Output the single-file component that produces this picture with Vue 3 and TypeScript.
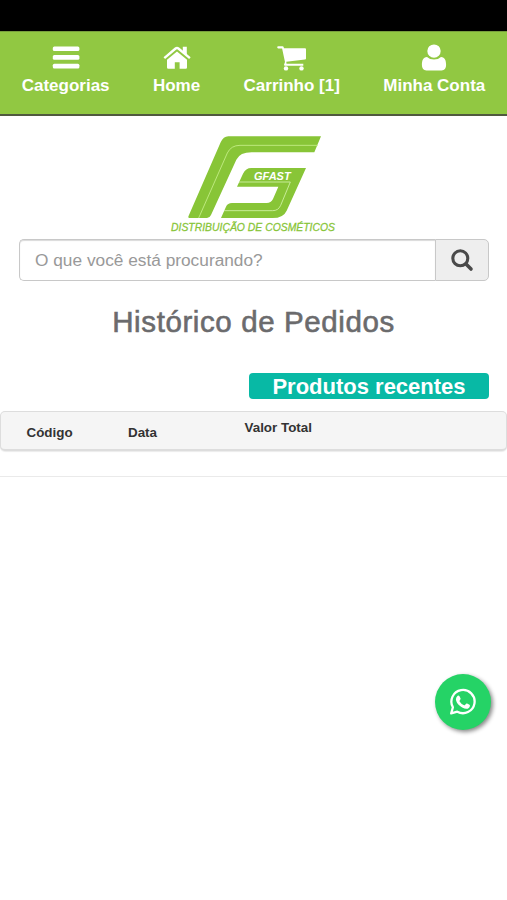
<script setup lang="ts">
import { ref } from 'vue'

interface NavItem {
  label: string
  icon: 'bars' | 'home' | 'cart' | 'user'
}

const navItems: NavItem[] = [
  { label: 'Categorias', icon: 'bars' },
  { label: 'Home', icon: 'home' },
  { label: 'Carrinho [1]', icon: 'cart' },
  { label: 'Minha Conta', icon: 'user' },
]
const query = ref('')
</script>

<template>
  <div class="page">
    <div class="status"></div>
    <nav class="nav">
      <a v-for="item in navItems" :key="item.icon" class="nav-item">
        <svg class="nav-icon" viewBox="0 0 30 28" fill="#fff">
          <g v-if="item.icon === 'bars'">
            <rect x="1.8" y="2.4" width="26.6" height="4.6" rx="1.5" />
            <rect x="1.8" y="11.1" width="26.6" height="4.6" rx="1.5" />
            <rect x="1.8" y="19.8" width="26.6" height="4.6" rx="1.5" />
          </g>
          <g v-else-if="item.icon === 'home'">
            <path d="M15 7.6 25 15.8V23.5Q25 24.7 23.8 24.7H17.6V18.2H12.8V24.7H6.2Q5 24.7 5 23.5V15.8Z" />
            <path d="M2.3 14.1 13.6 4.5Q15 3.4 16.4 4.5L27.9 14.1" fill="none" stroke="#fff" stroke-width="2.4" />
            <path d="M20.8 2.7H24.8V11.6L20.8 8.2Z" />
          </g>
          <g v-else-if="item.icon === 'cart'">
            <path d="M1.2 2.2H5.5Q6.5 2.2 6.8 3.5L7 4.3H28Q29 4.3 29 5.3V14.4Q29 15.4 28 15.5L9.3 17.7 9.5 19.7H26.3V21.8H8Q7 21.8 7 20.8L8 18 5.1 4.4H1.2Q.2 4.2 .2 3.3 .2 2.3 1.2 2.2Z" />
            <circle cx="9" cy="24.4" r="2.2" /><circle cx="24.5" cy="24.4" r="2.2" />
          </g>
          <g v-else>
            <path d="M8 12.9Q10.7 15.5 15 15.5T22 12.9C26 12.9 27.1 16.5 27.1 21.1Q27.1 26.5 22.6 26.5H7.4Q2.9 26.5 2.9 21.1C2.9 16.5 4 12.9 8 12.9Z" />
            <circle cx="15" cy="7.1" r="6.7" />
          </g>
        </svg>
        <span>{{ item.label }}</span>
      </a>
    </nav>

    <svg class="logo" viewBox="0 0 570 342">
      <path d="M205 34H483L463 82H275Q240 82 229 104L153 270Q149 279 141 279H88Q83 279 86 272L182 52Q190 34 205 34Z" fill="#88c537" />
      <path d="M438 129H274Q257 129 249 146L231 185H355L339 222Q333 234 320 234H216Q203 234 198 245L183 279H338Q370 279 380 257Z" fill="#88c537" />
      <path d="M474 61H240Q213 61 202 84L116 279" fill="none" stroke="#c8ef8c" stroke-width="2.5" />
      <path d="M237 171H391L362 241Q355 257 338 257H192" fill="none" stroke="#d4f3aa" stroke-width="2.5" />
      <text x="282" y="165" class="logo-name" textLength="110" lengthAdjust="spacingAndGlyphs">GFAST</text>
      <text x="33" y="317" class="logo-tag" textLength="492" lengthAdjust="spacingAndGlyphs">DISTRIBUIÇÃO DE COSMÉTICOS</text>
    </svg>

    <form class="search" @submit.prevent>
      <input v-model="query" type="text" placeholder="O que você está procurando?" />
      <button type="submit" aria-label="Buscar">
        <svg width="24" height="24" viewBox="0 0 24 24" fill="none" stroke="#4a4a4a">
          <circle cx="10.3" cy="10.3" r="7.5" stroke-width="3.1" />
          <path d="M16 16 21 21" stroke-width="3.6" stroke-linecap="round" />
        </svg>
      </button>
    </form>

    <h1>Histórico de Pedidos</h1>
    <div class="recent-row"><a class="recent">Produtos recentes</a></div>

    <div class="table-head">
      <span class="code">Código</span>
      <span class="date">Data</span>
      <span class="total">Valor Total</span>
    </div>
    <hr />

    <a class="whatsapp" aria-label="WhatsApp">
      <svg width="28" height="28" viewBox="0 0 28 28">
        <path d="M2.2 25.4 3.9 19.3A11.6 11.6 0 1 1 8.3 23.7Z" fill="none" stroke="#fff" stroke-width="2.3" stroke-linejoin="round" />
        <path d="M8.6 7.8Q9.7 6.9 10.5 8.2L11.6 10.6Q11.8 11.3 10.7 12.5 10.3 13 10.6 13.5 12.2 16.2 15.1 17.3 15.6 17.5 16 17L17.1 15.7Q17.5 15.3 18.1 15.6L20.5 16.8Q21.1 17.1 20.9 17.9 20.3 20.8 17.2 20.7C12.7 20.5 7.2 15.5 6.9 11.4Q6.9 9.3 8.6 7.8Z" fill="#fff" />
      </svg>
    </a>
  </div>
</template>

<style>
body {
  background: #fff;
}
</style>

<style scoped>
.page {
  height: 900px;
  overflow: hidden;
  font-family: "Liberation Sans", Arial, sans-serif;
  color: #333;
}
.page * {
  box-sizing: border-box;
}
.status {
  height: 31px;
  background: #000;
}
.nav {
  display: flex;
  justify-content: space-around;
  height: 85px;
  padding-top: 12px;
  background: #91c842;
  border-top: 1px solid #779f3d;
  border-bottom: 2px solid #50593f;
}
.nav-item {
  display: flex;
  flex-direction: column;
  align-items: center;
  color: #fff;
  font-size: 17px;
  font-weight: bold;
  line-height: 20px;
  white-space: nowrap;
}
.nav-icon {
  width: 30px;
  height: 28px;
  margin-bottom: 4px;
}
.logo {
  display: block;
  width: 190px;
  height: 114px;
  margin: 9px 0 0 160px;
}
.logo-name {
  font-size: 34px;
  font-weight: bold;
  font-style: italic;
  fill: #fff;
}
.logo-tag {
  font-size: 33px;
  font-style: italic;
  fill: #88c537;
  stroke: #88c537;
  stroke-width: 0.8px;
}
.search {
  display: flex;
  height: 42px;
  margin: 0 18px 0 19px;
}
.search input {
  flex: 1;
  min-width: 0;
  padding: 0 15px;
  border: 1px solid #c8c8c8;
  border-right: 0;
  border-radius: 5px 0 0 5px;
  box-shadow: inset 0 1px 1px rgba(0, 0, 0, 0.15);
  background: #fff;
  font-family: inherit;
  font-size: 17.3px;
  color: #555;
  outline: none;
}
.search input::placeholder {
  color: #999;
  opacity: 1;
}
.search button {
  display: flex;
  align-items: center;
  justify-content: center;
  width: 54px;
  padding: 0;
  border: 1px solid #c8c8c8;
  border-radius: 0 5px 5px 0;
  background: #eee;
}
h1 {
  margin: 23px 0 0;
  text-align: center;
  font-size: 29.5px;
  font-weight: normal;
  letter-spacing: 0.6px;
  line-height: 36px;
  color: #6b6b6d;
  -webkit-text-stroke: 0.6px #6b6b6d;
}
.recent-row {
  display: flex;
  justify-content: flex-end;
  padding: 33px 18px 0 0;
}
.recent {
  width: 240px;
  height: 26px;
  border-radius: 4px;
  background: #08b9a5;
  color: #fff;
  text-align: center;
  font-size: 22px;
  font-weight: bold;
  line-height: 27px;
}
.table-head {
  display: flex;
  height: 40px;
  margin-top: 12px;
  padding-left: 25.5px;
  border: 1px solid #ddd;
  border-bottom-width: 2px;
  border-radius: 5px;
  box-shadow: 0 1px 1px rgba(0, 0, 0, 0.08);
  background: #f5f5f5;
  font-size: 13.4px;
  font-weight: bold;
  line-height: 16px;
}
.code {
  width: 101.5px;
  padding-top: 13px;
}
.date {
  width: 116.5px;
  padding-top: 13px;
}
.total {
  padding-top: 8px;
}
hr {
  height: 1px;
  margin: 25px 0 0;
  border: 0;
  background: #eaeaea;
}
.whatsapp {
  position: fixed;
  top: 674px;
  left: 435px;
  display: flex;
  align-items: center;
  justify-content: center;
  width: 56px;
  height: 56px;
  border-radius: 50%;
  background: #25d366;
  box-shadow: 2px 2px 4px #888;
}
</style>
